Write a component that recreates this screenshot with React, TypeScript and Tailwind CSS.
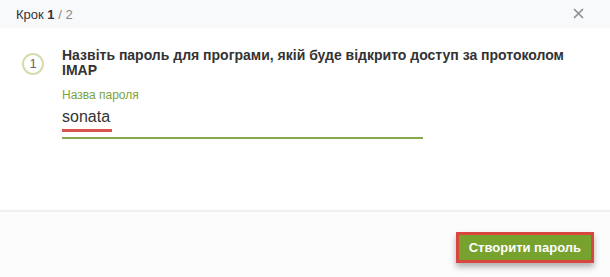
export default function App() {
  return (
    <div className="w-[610px] h-[277px] bg-white flex flex-col font-['Liberation_Sans',Arial,sans-serif] text-[#333]">
      {/* Header */}
      <div className="h-[28px] bg-[#f8f9fb] pl-4 pr-[26px] flex items-center justify-between">
        <span className="text-[13px] leading-none mt-[1px]">
          Крок <b className="font-bold">1</b> <span className="text-[#888]">/ 2</span>
        </span>
        <svg width="11" height="11" viewBox="0 0 11 11" className="mt-[-1px]">
          <path d="M1 1 L10 10 M10 1 L1 10" stroke="#8c8c8c" strokeWidth="1.6" />
        </svg>
      </div>

      {/* Body */}
      <div className="flex-1 pt-[20px] pl-[22px] flex gap-[18px]">
        <div className="mt-[5px] w-[22px] h-[22px] rounded-full border-2 border-[#d3dcb0] flex items-center justify-center text-[13px] text-[#666] shrink-0">
          1
        </div>
        <div className="flex flex-col">
          <h2 className="text-[14px] leading-[15px] font-bold text-[#333] w-[515px]">
            Назвіть пароль для програми, якій буде відкрито доступ за протоколом IMAP
          </h2>
          <label className="mt-[10px] text-[12px] leading-[14px] text-[#7ba33a]">Назва пароля</label>
          <div className="mt-[3px] w-[361px] border-b-2 border-[#86a94a] pb-[5px]">
            <div className="inline-block text-[16px] leading-[20px] text-[#333] border-b-[3px] border-[#d9534f] pb-[2px] pr-[2px]">
              sonata
            </div>
          </div>
        </div>
      </div>

      {/* Footer */}
      <div className="h-[67px] border-t-2 border-[#f0f0f0] bg-[#fcfcfc] flex justify-end items-start pt-[20px] pr-[16px]">
        <button className="border-[3px] border-[#d9453f] bg-[#77a22e] text-white font-bold text-[13px] leading-none h-[31px] px-[10px] shadow-[0_4px_6px_rgba(0,0,0,0.3)]">
          Створити пароль
        </button>
      </div>
    </div>
  );
}
